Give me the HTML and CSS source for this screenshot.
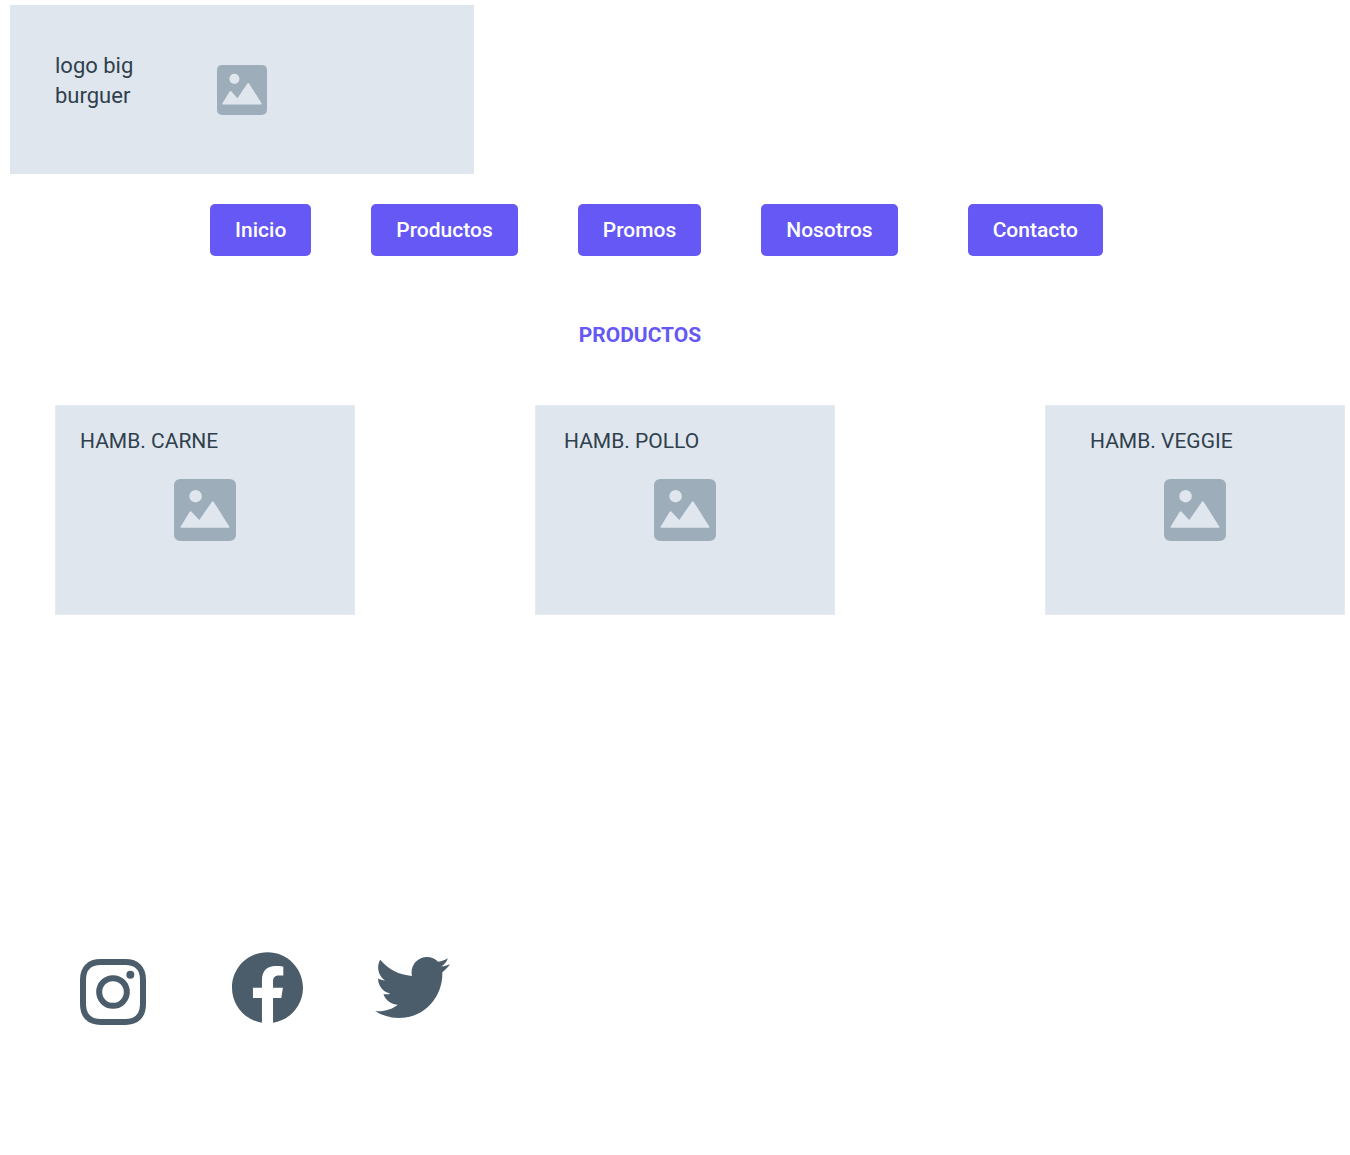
FILE: index.html
```html
<!DOCTYPE html>
<html lang="es">
<head>
<meta charset="utf-8">
<meta name="viewport" content="width=device-width, initial-scale=1">
<title>Big Burguer</title>
<link rel="stylesheet" href="styles.css">
</head>
<body>
<svg class="sprite" aria-hidden="true">
  <symbol id="picture" viewBox="0 0 184 184">
    <path fill="currentColor" fill-rule="evenodd" d="M20 0H164Q184 0 184 20V164Q184 184 164 184H20Q0 184 0 164V20Q0 0 20 0ZM64 32.500A18.500 18.500 0 1 0 64 69.500A18.500 18.500 0 1 0 64 32.500ZM22 145H162Q166 145 164 141L118 68Q115 64 112 68L75 122L52 97Q49 94 46 98L20 141Q18 145 22 145Z"/>
  </symbol>
</svg>
<header class="banner">
  <p class="brand">logo big burguer</p>
  <svg class="banner-picture"><use href="#picture"/></svg>
</header>
<nav class="menu">
  <button type="button">Inicio</button>
  <button type="button">Productos</button>
  <button type="button">Promos</button>
  <button type="button">Nosotros</button>
  <button type="button" class="menu-last">Contacto</button>
</nav>
<main>
  <h1 class="title">PRODUCTOS</h1>
  <div class="products">
    <article class="card carne">
      <h2>HAMB. CARNE</h2>
      <svg class="card-picture"><use href="#picture"/></svg>
    </article>
    <article class="card pollo">
      <h2>HAMB. POLLO</h2>
      <svg class="card-picture"><use href="#picture"/></svg>
    </article>
    <article class="card veggie">
      <h2>HAMB. VEGGIE</h2>
      <svg class="card-picture"><use href="#picture"/></svg>
    </article>
  </div>
</main>
<footer class="social">
  <a href="#instagram" class="instagram" aria-label="Instagram">
    <svg viewBox="0 0 198 198" fill="none" stroke="currentColor" stroke-width="18">
      <path d="M62 9H136C170 9 189 28 189 62V136C189 170 170 189 136 189H62C28 189 9 170 9 136V62C9 28 28 9 62 9Z"/>
      <circle cx="99" cy="99" r="41.500"/>
      <circle cx="151" cy="47" r="12" fill="currentColor" stroke="none"/>
    </svg>
  </a>
  <a href="#facebook" class="facebook" aria-label="Facebook">
    <svg viewBox="0 0 24 24" fill="currentColor"><path d="M24 12.073c0-6.627-5.373-12-12-12s-12 5.373-12 12c0 5.990 4.388 10.954 10.125 11.854v-8.385H7.078v-3.470h3.047V9.430c0-3.007 1.792-4.669 4.533-4.669 1.312 0 2.686.235 2.686.235v2.953H15.830c-1.491 0-1.956.925-1.956 1.874v2.250h3.328l-.532 3.470h-2.796v8.385C19.612 23.027 24 18.062 24 12.073z"/></svg>
  </a>
  <a href="#twitter" class="twitter" aria-label="Twitter">
    <svg viewBox="0 48 512 416" fill="currentColor"><path d="M459.370 151.716c.325 4.548.325 9.097.325 13.645 0 138.720-105.583 298.558-298.558 298.558-59.452 0-114.680-17.219-161.137-47.106 8.447.974 16.568 1.299 25.340 1.299 49.055 0 94.213-16.568 130.274-44.832-46.132-.975-84.792-31.188-98.112-72.772 6.498.974 12.995 1.624 19.818 1.624 9.421 0 18.843-1.300 27.614-3.573-48.081-9.747-84.143-51.980-84.143-102.985v-1.299c13.969 7.797 30.214 12.670 47.431 13.319-28.264-18.843-46.781-51.005-46.781-87.391 0-19.492 5.197-37.360 14.294-52.954 51.655 63.675 129.300 105.258 216.365 109.807-1.624-7.797-2.599-15.918-2.599-24.040 0-57.828 46.782-104.934 104.934-104.934 30.213 0 57.502 12.670 76.670 33.137 23.715-4.548 46.456-13.320 66.599-25.340-7.798 24.366-24.366 44.833-46.132 57.827 21.117-2.273 41.584-8.122 60.426-16.243-14.292 20.791-32.161 39.308-52.628 54.253z"/></svg>
  </a>
</footer>
</body>
</html>
```
FILE: styles.css
```css
* {
  box-sizing: border-box;
}

body {
  margin: 0;
  padding: 5px 5px 80px 10px;
  background: #fff;
  color: #2f404d;
  font-family: Roboto, "Liberation Sans", sans-serif;
  font-size: 21px;
  line-height: 30px;
}

h1,
h2,
p {
  margin: 0;
  font-size: inherit;
}

svg {
  display: block;
}

.sprite {
  position: absolute;
  width: 0;
  height: 0;
}

.banner {
  display: grid;
  grid-template-columns: 1fr 50px 1fr;
  align-items: center;
  max-width: 464px;
  min-height: 169px;
  background: #dfe6ee;
}

.brand {
  max-width: 160px;
  padding: 0 0 18px 45px;
  font-size: 22px;
}

.banner-picture {
  width: 50px;
  height: 50px;
  color: #9dadb9;
}

.menu {
  display: flex;
  flex-wrap: wrap;
  justify-content: center;
  gap: 20px 60px;
  margin-top: 30px;
  padding-right: 42px;
}

.menu button {
  height: 52px;
  padding: 0 25px;
  border: 0;
  border-radius: 5px;
  background: #6558f5;
  color: #fff;
  font: inherit;
  font-weight: 500;
}

.menu .menu-last {
  margin-left: 10px;
}

.title {
  margin: 64px 0 55px;
  padding-right: 75px;
  color: #6558f5;
  font-weight: 700;
  text-align: center;
}

.products {
  display: grid;
  grid-template-columns: 480fr 510fr 300px;
  padding-left: 45px;
}

.card {
  width: 300px;
  min-height: 210px;
  padding-top: 20px;
  border: 1px solid #e6ebf1;
  background: #dfe6ee;
}

.card h2 {
  font-weight: 400;
}

.carne h2 {
  padding-left: 24px;
}

.pollo h2 {
  padding-left: 28px;
}

.veggie h2 {
  padding-left: 44px;
}

.card-picture {
  width: 62px;
  height: 62px;
  margin: 23px auto 0;
  color: #9dadb9;
}

.social {
  display: flex;
  align-items: center;
  margin-top: 334px;
  padding-left: 70px;
}

.social a {
  color: #4b5d6b;
}

.social svg {
  width: 100%;
  overflow: visible;
}

.instagram {
  width: 66px;
  padding-top: 10px;
}

.facebook {
  width: 71px;
  margin-left: 86px;
}

.twitter {
  width: 75px;
  margin-left: 72px;
}

@media (max-width: 1000px) {
  .products {
    grid-template-columns: repeat(auto-fit, 300px);
    gap: 30px;
  }
}
```
